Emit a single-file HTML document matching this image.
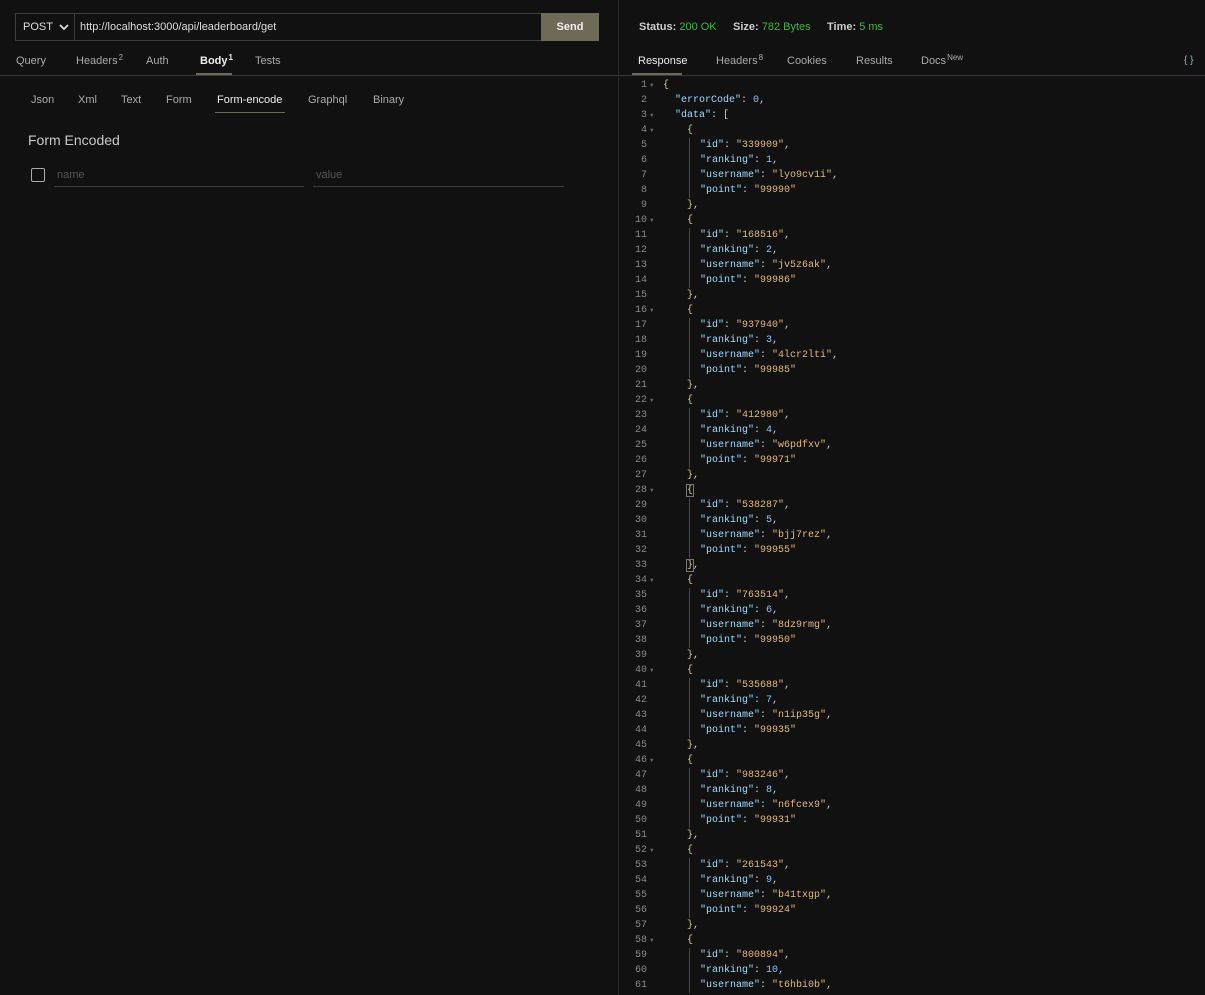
<!DOCTYPE html>
<html><head><meta charset="utf-8"><style>
*{margin:0;padding:0;box-sizing:border-box}
body{width:1205px;height:995px;background:#111111;font-family:"Liberation Sans",sans-serif;color:#bdbdbd;position:relative;overflow:hidden;font-size:11px}
.a{position:absolute;white-space:nowrap}
.div{position:absolute;left:618px;top:0;width:1px;height:995px;background:#2c2c2c}
.hl{position:absolute;top:75px;height:1px;background:#3a3a3a}
.url{left:15px;top:13px;width:584px;height:28px;border:1px solid #3e3e3e}
.send{left:541px;top:13px;width:58px;height:28px;background:#6e6a58;color:#f0f0f0;font-weight:bold;font-size:11px;text-align:center;line-height:28px}
.tab{font-size:11px;color:#aaa;top:55px}
sup{font-size:8px;vertical-align:top;position:relative;top:-2px;margin-left:1px}
.ul{position:absolute;height:2px;background:#6e6a58}
.sub{top:94px;color:#aaa}
pre{position:absolute;font-family:"Liberation Mono",monospace;font-size:10px;line-height:15px;color:#cfcfcf}
.ln{left:620px;width:27px;text-align:right;color:#8a8a8a;top:78px}
.fold{left:650px;top:78px;color:#666;font-size:6px}
.code{left:663px;top:78px}
.k{color:#9cdcfe}.s{color:#e2b97a}.n{color:#8fc4ff}.b{color:#d6c88a}
.g{display:inline-block;width:13px;height:15px;vertical-align:top;background:linear-gradient(#4a4a4a,#4a4a4a) 2px 0/1px 100% no-repeat}
</style></head><body>
<div class="div"></div>
<div class="hl" style="left:0;width:618px"></div>
<div class="hl" style="left:619px;width:586px"></div>

<div class="a url"></div>
<div class="a" style="left:74px;top:13px;width:1px;height:28px;background:#3e3e3e"></div>
<div class="a" style="left:23px;top:21px;color:#ddd;font-size:11px">POST</div>
<svg class="a" style="left:59px;top:23px" width="10" height="8" viewBox="0 0 10 8"><path d="M1 2 L5 6 L9 2" stroke="#ddd" stroke-width="1.8" fill="none"/></svg>
<div class="a" style="left:80px;top:21px;color:#ddd;font-size:11px">http://localhost:3000/api/leaderboard/get</div>
<div class="a send">Send</div>

<div class="a tab" style="left:16px">Query</div>
<div class="a tab" style="left:76px">Headers<sup>2</sup></div>
<div class="a tab" style="left:146px">Auth</div>
<div class="a tab" style="left:200px;color:#eee;font-weight:bold">Body<sup>1</sup></div>
<div class="a tab" style="left:255px">Tests</div>
<div class="ul" style="left:196px;top:73px;width:36px"></div>

<div class="a sub" style="left:31px">Json</div>
<div class="a sub" style="left:78px">Xml</div>
<div class="a sub" style="left:121px">Text</div>
<div class="a sub" style="left:166px">Form</div>
<div class="a sub" style="left:217px;color:#eee">Form-encode</div>
<div class="a sub" style="left:308px">Graphql</div>
<div class="a sub" style="left:373px">Binary</div>
<div class="ul" style="left:215px;top:112px;width:70px;height:1px"></div>

<div class="a" style="left:28px;top:132px;font-size:14px;color:#c8c8c8">Form Encoded</div>
<div class="a" style="left:31px;top:168px;width:14px;height:14px;border:1px solid #aaa;border-radius:2px"></div>
<div class="a" style="left:57px;top:169px;color:#555">name</div>
<div class="a" style="left:54px;top:186px;width:250px;height:1px;background:#3c3c3c"></div>
<div class="a" style="left:316px;top:169px;color:#555">value</div>
<div class="a" style="left:313px;top:186px;width:251px;height:1px;background:#3c3c3c"></div>

<div class="a" style="left:639px;top:21px;font-weight:bold;color:#ccc">Status: <span style="color:#3fb53f;font-weight:normal">200 OK</span></div>
<div class="a" style="left:733px;top:21px;font-weight:bold;color:#ccc">Size: <span style="color:#3fb53f;font-weight:normal">782 Bytes</span></div>
<div class="a" style="left:827px;top:21px;font-weight:bold;color:#ccc">Time: <span style="color:#3fb53f;font-weight:normal">5 ms</span></div>

<div class="a tab" style="left:638px;color:#eee">Response</div>
<div class="a tab" style="left:716px">Headers<sup>8</sup></div>
<div class="a tab" style="left:787px">Cookies</div>
<div class="a tab" style="left:856px">Results</div>
<div class="a tab" style="left:921px">Docs<sup>New</sup></div>
<div class="a tab" style="left:1184px;color:#8ab4d8;font-size:10px">{ }</div>
<div class="ul" style="left:632px;top:73px;width:50px"></div>

<pre class="ln">1
2
3
4
5
6
7
8
9
10
11
12
13
14
15
16
17
18
19
20
21
22
23
24
25
26
27
28
29
30
31
32
33
34
35
36
37
38
39
40
41
42
43
44
45
46
47
48
49
50
51
52
53
54
55
56
57
58
59
60
61</pre>
<pre class="fold" style="line-height:15px">▼

▼
▼





▼





▼





▼





▼





▼





▼





▼





▼





▼</pre>
<pre class="code"><span class="b">{</span>
  <span class="k">"errorCode"</span>: <span class="n">0</span>,
  <span class="k">"data"</span>: [
    <span class="b">{</span>
    <span class="g"></span><span class="k">"id"</span>: <span class="s">"339909"</span>,
    <span class="g"></span><span class="k">"ranking"</span>: <span class="n">1</span>,
    <span class="g"></span><span class="k">"username"</span>: <span class="s">"lyo9cv1i"</span>,
    <span class="g"></span><span class="k">"point"</span>: <span class="s">"99990"</span>
    <span class="b">}</span>,
    <span class="b">{</span>
    <span class="g"></span><span class="k">"id"</span>: <span class="s">"168516"</span>,
    <span class="g"></span><span class="k">"ranking"</span>: <span class="n">2</span>,
    <span class="g"></span><span class="k">"username"</span>: <span class="s">"jv5z6ak"</span>,
    <span class="g"></span><span class="k">"point"</span>: <span class="s">"99986"</span>
    <span class="b">}</span>,
    <span class="b">{</span>
    <span class="g"></span><span class="k">"id"</span>: <span class="s">"937940"</span>,
    <span class="g"></span><span class="k">"ranking"</span>: <span class="n">3</span>,
    <span class="g"></span><span class="k">"username"</span>: <span class="s">"4lcr2lti"</span>,
    <span class="g"></span><span class="k">"point"</span>: <span class="s">"99985"</span>
    <span class="b">}</span>,
    <span class="b">{</span>
    <span class="g"></span><span class="k">"id"</span>: <span class="s">"412980"</span>,
    <span class="g"></span><span class="k">"ranking"</span>: <span class="n">4</span>,
    <span class="g"></span><span class="k">"username"</span>: <span class="s">"w6pdfxv"</span>,
    <span class="g"></span><span class="k">"point"</span>: <span class="s">"99971"</span>
    <span class="b">}</span>,
    <span class="b" style="outline:1px solid #777">{</span>
    <span class="g"></span><span class="k">"id"</span>: <span class="s">"538287"</span>,
    <span class="g"></span><span class="k">"ranking"</span>: <span class="n">5</span>,
    <span class="g"></span><span class="k">"username"</span>: <span class="s">"bjj7rez"</span>,
    <span class="g"></span><span class="k">"point"</span>: <span class="s">"99955"</span>
    <span class="b" style="outline:1px solid #777">}</span>,
    <span class="b">{</span>
    <span class="g"></span><span class="k">"id"</span>: <span class="s">"763514"</span>,
    <span class="g"></span><span class="k">"ranking"</span>: <span class="n">6</span>,
    <span class="g"></span><span class="k">"username"</span>: <span class="s">"8dz9rmg"</span>,
    <span class="g"></span><span class="k">"point"</span>: <span class="s">"99950"</span>
    <span class="b">}</span>,
    <span class="b">{</span>
    <span class="g"></span><span class="k">"id"</span>: <span class="s">"535688"</span>,
    <span class="g"></span><span class="k">"ranking"</span>: <span class="n">7</span>,
    <span class="g"></span><span class="k">"username"</span>: <span class="s">"n1ip35g"</span>,
    <span class="g"></span><span class="k">"point"</span>: <span class="s">"99935"</span>
    <span class="b">}</span>,
    <span class="b">{</span>
    <span class="g"></span><span class="k">"id"</span>: <span class="s">"983246"</span>,
    <span class="g"></span><span class="k">"ranking"</span>: <span class="n">8</span>,
    <span class="g"></span><span class="k">"username"</span>: <span class="s">"n6fcex9"</span>,
    <span class="g"></span><span class="k">"point"</span>: <span class="s">"99931"</span>
    <span class="b">}</span>,
    <span class="b">{</span>
    <span class="g"></span><span class="k">"id"</span>: <span class="s">"261543"</span>,
    <span class="g"></span><span class="k">"ranking"</span>: <span class="n">9</span>,
    <span class="g"></span><span class="k">"username"</span>: <span class="s">"b41txgp"</span>,
    <span class="g"></span><span class="k">"point"</span>: <span class="s">"99924"</span>
    <span class="b">}</span>,
    <span class="b">{</span>
    <span class="g"></span><span class="k">"id"</span>: <span class="s">"800894"</span>,
    <span class="g"></span><span class="k">"ranking"</span>: <span class="n">10</span>,
    <span class="g"></span><span class="k">"username"</span>: <span class="s">"t6hbi0b"</span>,</pre>
</body></html>
